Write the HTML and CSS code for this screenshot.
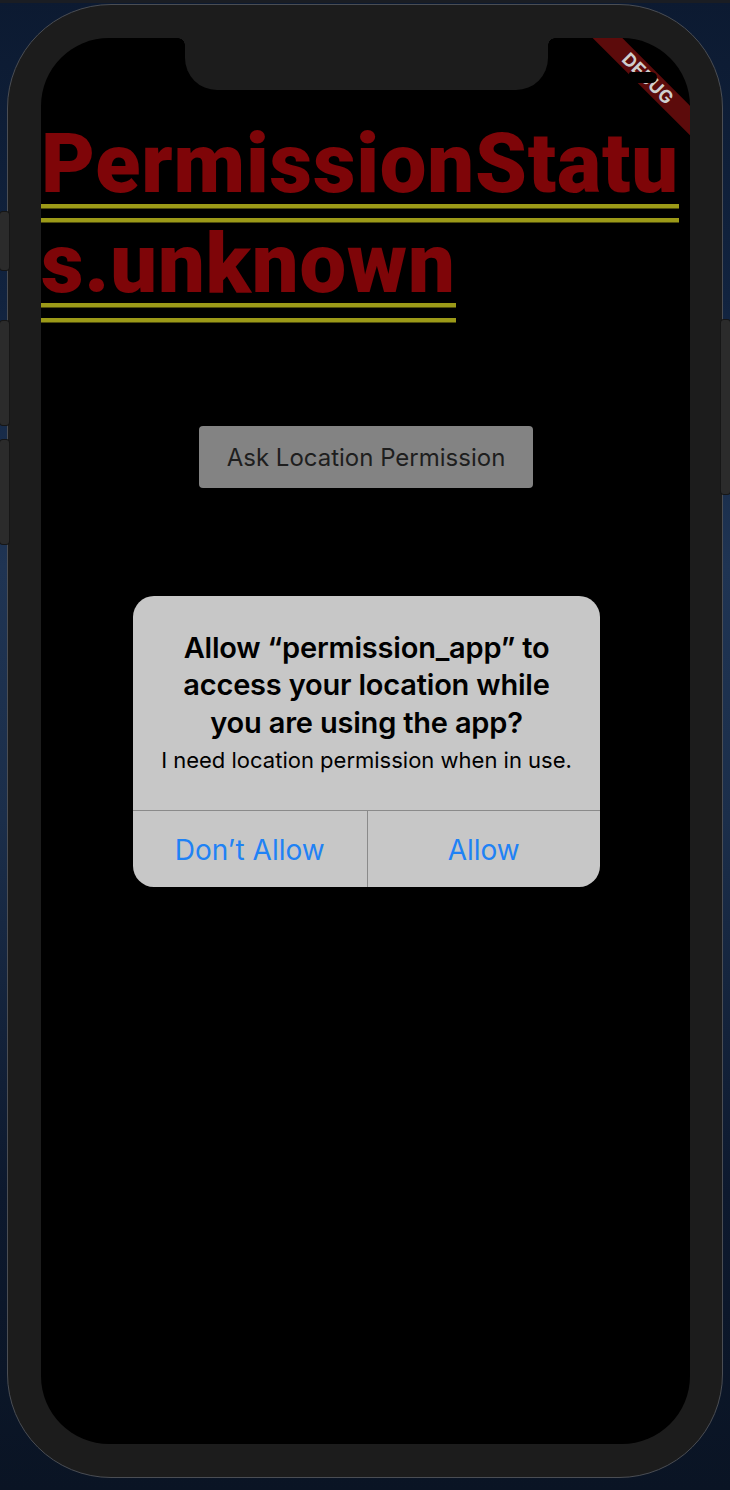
FILE: index.html
```html
<!DOCTYPE html>
<html lang="en">
<head>
<meta charset="utf-8">
<title>permission_app</title>
<link rel="stylesheet" href="styles.css">
</head>
<body>
<div class="topstrip"></div>
<div class="stage">
  <div class="phone">
    <span class="sidebtn left b1"></span>
    <span class="sidebtn left b2"></span>
    <span class="sidebtn left b3"></span>
    <span class="sidebtn right b4"></span>
    <div class="screen">
      <div class="notch"></div>
      <h1 class="status"><span class="status-text">PermissionStatus.unknown</span></h1>
      <div class="actions">
        <button class="ask-btn" type="button">Ask Location Permission</button>
      </div>
      <div class="banner"><span>DEBUG</span></div>
      <div class="sensor"></div>
      <div class="barrier">
        <div class="alert" role="alertdialog">
          <div class="alert-body">
            <p class="alert-title">Allow “permission_app” to access your location while you are using the app?</p>
            <p class="alert-msg">I need location permission when in use.</p>
          </div>
          <div class="alert-actions">
            <button class="alert-btn" type="button">Don’t Allow</button>
            <button class="alert-btn" type="button">Allow</button>
          </div>
        </div>
      </div>
    </div>
  </div>
</div>
</body>
</html>
```
FILE: styles.css
```css
* { box-sizing: border-box; }
html, body { margin: 0; padding: 0; }
body {
  width: 730px;
  height: 1490px;
  overflow: hidden;
  background: linear-gradient(180deg, #0c1a31 0%, #11233f 20%, #1f3453 38%, #1b2e4a 55%, #0d192e 80%, #0a1424 100%);
  font-family: Inter, "Noto Sans", sans-serif;
  position: relative;
}
.topstrip {
  height: 3px;
  background: #1a1d23;
}
.stage {
  padding: 1px 7px 0 7px;
}
.phone {
  position: relative;
  width: 716px;
  height: 1474px;
  border: 1px solid #4a4d53;
  border-radius: 104px;
  background: #1c1c1c;
  padding: 33px 32px 33px 33px;
}
.sidebtn {
  position: absolute;
  width: 9px;
  background: #2b2b2b;
  border-radius: 3px;
  box-shadow: 0 0 0 1px #161616;
}
.sidebtn.left { left: -8px; }
.sidebtn.right { right: -8px; }
.b1 { top: 207px; height: 58px; }
.b2 { top: 316px; height: 104px; }
.b3 { top: 435px; height: 104px; }
.b4 { top: 315px; height: 174px; }

.screen {
  position: relative;
  width: 100%;
  height: 100%;
  background: #000;
  border-radius: 68px;
  overflow: hidden;
  display: flex;
  flex-direction: column;
  align-items: stretch;
}
.notch {
  position: absolute;
  top: 0;
  left: 144px;
  width: 363px;
  height: 52px;
  background: #1c1c1c;
  border-radius: 0 0 32px 32px;
}
.notch::before,
.notch::after {
  content: "";
  position: absolute;
  top: 0;
  width: 7px;
  height: 7px;
}
.notch::before {
  left: -7px;
  background: radial-gradient(circle at 0 100%, transparent 6.5px, #1c1c1c 7px);
}
.notch::after {
  right: -7px;
  background: radial-gradient(circle at 100% 100%, transparent 6.5px, #1c1c1c 7px);
}

.status {
  margin: 76px 0 0 0;
  font-family: Roboto, sans-serif;
  font-weight: 900;
  font-size: 83px;
  line-height: 99.5px;
  letter-spacing: 0.8px;
  color: #7e0508;
  word-break: break-all;
}
.status-text {
  padding-bottom: 14px;
  -webkit-box-decoration-break: clone;
  box-decoration-break: clone;
  background-image: linear-gradient(#9c9a18, #9c9a18), linear-gradient(#9c9a18, #9c9a18);
  background-size: 100% 4.5px, 100% 4.5px;
  background-position: 0 88.5px, 0 103px;
  background-repeat: no-repeat;
}
.actions {
  display: flex;
  justify-content: center;
  margin-top: 113px;
}
.ask-btn {
  width: 334px;
  height: 62px;
  border: 0;
  border-radius: 4px;
  background: #838383;
  color: #1e1e1e;
  font-family: Inter, sans-serif;
  font-size: 24px;
  font-weight: 400;
  letter-spacing: 0;
  padding: 0;
  margin-left: 1px;
}

.banner {
  position: absolute;
  left: 487px;
  top: 30px;
  width: 240px;
  height: 21px;
  background: #5c0b0b;
  transform: rotate(45deg);
  display: flex;
  align-items: center;
  justify-content: center;
}
.banner span {
  font-family: Inter, sans-serif;
  font-weight: 700;
  font-size: 18px;
  color: #cfcfcf;
  letter-spacing: 0.3px;
}
.sensor {
  position: absolute;
  left: 588px;
  top: 34px;
  width: 28px;
  height: 11px;
  background: #000;
  border-radius: 2px 6px 6px 2px;
}

.barrier {
  position: absolute;
  inset: 0;
  display: flex;
  align-items: center;
  justify-content: center;
  padding-left: 2px;
}
.alert {
  width: 467px;
  height: 291px;
  border-radius: 21px;
  background: #c7c7c7;
  display: flex;
  flex-direction: column;
  overflow: hidden;
}
.alert-body {
  flex: 1;
  padding: 33px 16px 0 16px;
  text-align: center;
  color: #000;
}
.alert-title {
  margin: 0 18px;
  font-family: Inter, sans-serif;
  font-weight: 600;
  font-size: 29px;
  line-height: 37.5px;
  letter-spacing: -0.2px;
}
.alert-msg {
  margin: 4px 0 0 0;
  font-family: Inter, sans-serif;
  font-weight: 400;
  font-size: 22px;
  line-height: 30px;
  letter-spacing: 0;
}
.alert-actions {
  height: 77px;
  border-top: 1px solid #8a8a8a;
  display: grid;
  grid-template-columns: 1fr 1fr;
}
.alert-btn {
  border: 0;
  background: transparent;
  color: #1f82f5;
  font-family: Inter, sans-serif;
  font-size: 28px;
  font-weight: 400;
  padding: 3px 0 0 0;
}
.alert-btn + .alert-btn {
  border-left: 1px solid #8a8a8a;
}
```
